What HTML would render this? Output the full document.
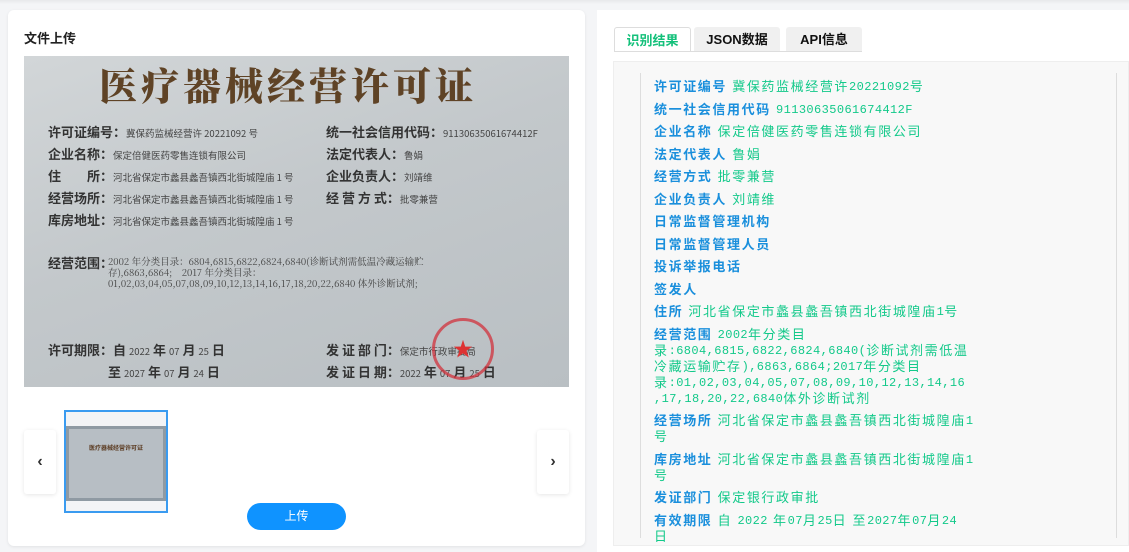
<!DOCTYPE html>
<html><head><meta charset="utf-8"><style>
*{margin:0;padding:0;box-sizing:border-box}
html,body{width:1129px;height:552px;overflow:hidden}
body{background:#f4f5f7;font-family:"Liberation Sans","Noto Sans CJK SC",sans-serif;position:relative}
.topbar{position:absolute;left:0;top:0;width:1129px;height:4px;background:linear-gradient(#e8e9eb,#f4f5f7)}
.lc{position:absolute;left:8px;top:10px;width:577px;height:536px;background:#fff;border-radius:6px;box-shadow:0 1px 3px rgba(0,0,0,.08)}
.lc h3{position:absolute;left:16px;top:18px;font-size:13px;font-weight:bold;color:#222}
.img{position:absolute;left:24px;top:56px;width:545px;height:331px;background:linear-gradient(160deg,#d2d6d8 0%,#c3c8cb 45%,#b9bfc3 100%);overflow:hidden;font-family:"Noto Serif CJK SC","Liberation Serif",serif;color:#3a3a3a}
.img div{position:absolute;white-space:nowrap}
.t{left:75px;top:0px;font-size:38px;font-weight:900;color:#5f4326;letter-spacing:4px}
.l{font-size:13px;font-weight:bold;font-family:"Noto Sans CJK SC",sans-serif;color:#333}
.s{font-size:9.5px;color:#444;font-weight:normal}
.stamp{left:408px;top:262px;width:62px;height:62px;border:3px solid rgba(210,50,60,.75);border-radius:50%;color:#d33;font-size:20px;text-align:center;line-height:54px}
.rc{position:absolute;left:597px;top:10px;width:532px;height:542px;background:#fff}
.tab{position:absolute;top:27px;height:25px;font-size:13px;font-weight:bold;color:#111;background:#f0f0f0;text-align:center;line-height:25px;border-radius:3px 3px 0 0}
.box{position:absolute;left:613px;top:61px;width:516px;height:485px;background:#f8f8f8;border:1px solid #eee}
.inner{position:absolute;left:640px;top:73px;width:477px;height:465px;border-left:1px solid #ddd;border-right:1px solid #ddd}
.rows{position:absolute;left:654px;top:79px;width:400px;font-size:13px;letter-spacing:1.6px;line-height:16px}
.rows p{margin-bottom:6.5px;color:#13c98a;white-space:nowrap}
.rows b{color:#1a8fdc}
.n{font-family:"Liberation Mono",monospace;font-size:12px;letter-spacing:0.4px;display:inline-block;line-height:16px;height:16px;vertical-align:top}
.arrow{position:absolute;top:430px;width:32px;height:64px;background:#fff;border-radius:3px;box-shadow:0 1px 4px rgba(0,0,0,.1);font-size:16px;line-height:64px;text-align:center;color:#333;font-weight:bold}
</style></head><body>
<div class="topbar"></div>
<div class="lc"><h3>文件上传</h3></div>
<div class="img">
<div class="t">医疗器械经营许可证</div>
<div class="l" style="left:24px;top:66px">许可证编号：<span class="s">冀保药监械经营许 20221092 号</span></div>
<div class="l" style="left:24px;top:88px">企业名称：<span class="s">保定倍健医药零售连锁有限公司</span></div>
<div class="l" style="left:24px;top:110px">住　　所：<span class="s">河北省保定市蠡县蠡吾镇西北街城隍庙 1 号</span></div>
<div class="l" style="left:24px;top:132px">经营场所：<span class="s">河北省保定市蠡县蠡吾镇西北街城隍庙 1 号</span></div>
<div class="l" style="left:24px;top:154px">库房地址：<span class="s">河北省保定市蠡县蠡吾镇西北街城隍庙 1 号</span></div>
<div class="l" style="left:302px;top:66px">统一社会信用代码：<span class="s">91130635061674412F</span></div>
<div class="l" style="left:302px;top:88px">法定代表人：<span class="s">鲁娟</span></div>
<div class="l" style="left:302px;top:110px">企业负责人：<span class="s">刘靖维</span></div>
<div class="l" style="left:302px;top:132px">经 营 方 式：<span class="s">批零兼营</span></div>
<div class="l" style="left:24px;top:197px">经营范围：</div>
<div class="s" style="left:84px;top:198px">2002 年分类目录：6804,6815,6822,6824,6840(诊断试剂需低温冷藏运输贮</div>
<div class="s" style="left:84px;top:209px">存),6863,6864;　2017 年分类目录：</div>
<div class="s" style="left:84px;top:220px">01,02,03,04,05,07,08,09,10,12,13,14,16,17,18,20,22,6840 体外诊断试剂;</div>
<div class="l" style="left:24px;top:284px">许可期限：自 <span class="s">2022</span> 年 <span class="s">07</span> 月 <span class="s">25</span> 日</div>
<div class="l" style="left:84px;top:306px">至 <span class="s">2027</span> 年 <span class="s">07</span> 月 <span class="s">24</span> 日</div>
<div class="l" style="left:302px;top:284px">发 证 部 门：<span class="s">保定市行政审批局</span></div>
<div class="l" style="left:302px;top:306px">发 证 日 期：<span class="s">2022</span> 年 <span class="s">07</span> 月 <span class="s">25</span> 日</div>
<div class="stamp">★</div>
</div>
<div class="arrow" style="left:24px">‹</div>
<div class="arrow" style="left:537px">›</div>
<div style="position:absolute;left:64px;top:410px;width:104px;height:103px;border:2px solid #3a9bf0;background:#f3f4f6">
<div style="position:absolute;left:0;top:14px;width:100px;height:75px;background:#b7bec4;border:3px solid #8f9aa3"><div style="font-size:6px;color:#5a3a20;text-align:center;margin-top:14px;font-weight:bold">医疗器械经营许可证</div></div></div>
<div style="position:absolute;left:247px;top:503px;width:99px;height:27px;background:#0f93ff;border-radius:14px;color:#fff;font-size:12px;text-align:center;line-height:27px">上传</div>
<div class="rc"></div>
<div class="tab" style="left:614px;width:77px;background:#fff;border:1px solid #ddd;border-bottom:none;color:#13c07a">识别结果</div>
<div class="tab" style="left:694px;width:86px">JSON数据</div>
<div class="tab" style="left:786px;width:76px">API信息</div>
<div style="position:absolute;left:614px;top:51px;width:248px;height:1px;background:#ddd"></div>
<div class="box"></div>
<div class="inner"></div>
<div class="rows">
<p><b>许可证编号</b> 冀保药监械经营许<span class="n">20221092</span>号</p>
<p><b>统一社会信用代码</b> <span class="n">91130635061674412F</span></p>
<p><b>企业名称</b> 保定倍健医药零售连锁有限公司</p>
<p><b>法定代表人</b> 鲁娟</p>
<p><b>经营方式</b> 批零兼营</p>
<p><b>企业负责人</b> 刘靖维</p>
<p><b>日常监督管理机构</b></p>
<p><b>日常监督管理人员</b></p>
<p><b>投诉举报电话</b></p>
<p><b>签发人</b></p>
<p><b>住所</b> 河北省保定市蠡县蠡吾镇西北街城隍庙<span class="n">1</span>号</p>
<p><b>经营范围</b> <span class="n">2002</span>年分类目<br>录<span class="n">:6804,6815,6822,6824,6840(</span>诊断试剂需低温<br>冷藏运输贮存<span class="n">),6863,6864;2017</span>年分类目<br>录<span class="n">:01,02,03,04,05,07,08,09,10,12,13,14,16</span><br><span class="n">,17,18,20,22,6840</span>体外诊断试剂</p>
<p><b>经营场所</b> 河北省保定市蠡县蠡吾镇西北街城隍庙<span class="n">1</span><br>号</p>
<p><b>库房地址</b> 河北省保定市蠡县蠡吾镇西北街城隍庙<span class="n">1</span><br>号</p>
<p><b>发证部门</b> 保定银行政审批</p>
<p><b>有效期限</b> 自 <span class="n">2022</span> 年<span class="n">07</span>月<span class="n">25</span>日 至<span class="n">2027</span>年<span class="n">07</span>月<span class="n">24</span><br>日</p>
</div>
</body></html>
